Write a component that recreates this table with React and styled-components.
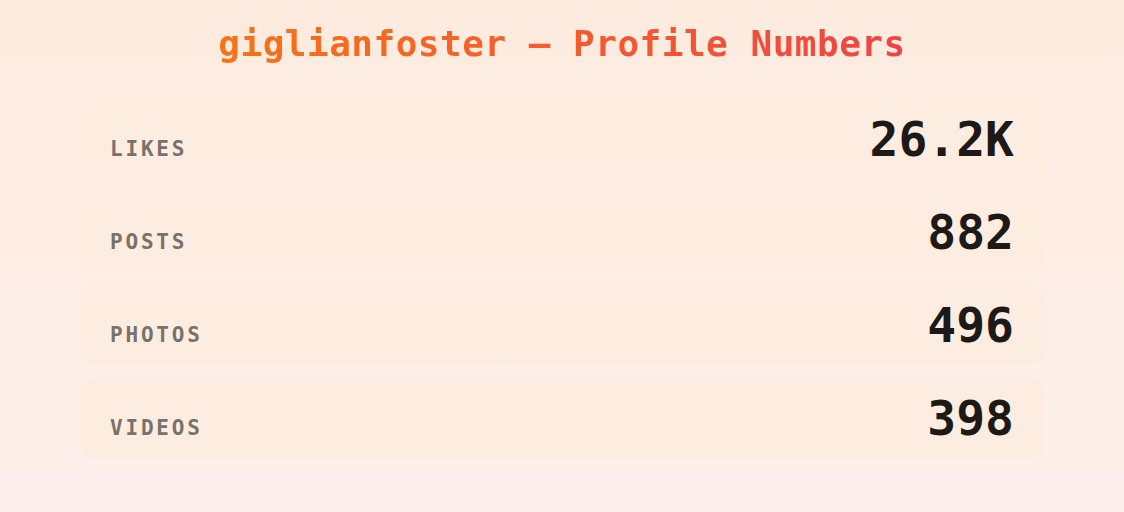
import React from "react";
import styled, { createGlobalStyle } from "styled-components";

const GlobalStyle = createGlobalStyle`
  html, body {
    margin: 0;
    padding: 0;
  }
  body {
    background: linear-gradient(180deg, #fdebdf 0%, #fdf0ec 100%);
    min-height: 512px;
    font-family: "DejaVu Sans Mono", "Liberation Mono", monospace;
  }
`;

const stats = [
  { label: "Likes", value: "26.2K" },
  { label: "Posts", value: "882" },
  { label: "Photos", value: "496" },
  { label: "Videos", value: "398" },
];

export default function App() {
  return (
    <>
      <GlobalStyle />
      <Page>
        <Title>giglianfoster — Profile Numbers</Title>
        <StatList>
          {stats.map((s) => (
            <StatRow key={s.label}>
              <Label>{s.label}</Label>
              <Value>{s.value}</Value>
            </StatRow>
          ))}
        </StatList>
      </Page>
    </>
  );
}

const Page = styled.div`
  min-height: 512px;
  box-sizing: border-box;
  padding: 22px 80px 0;
  display: flex;
  flex-direction: column;
  align-items: stretch;
`;

const Title = styled.h1`
  margin: 0 0 34px;
  text-align: center;
  font-size: 36px;
  line-height: 44px;
  font-weight: bold;
  letter-spacing: 0.5px;
  background: linear-gradient(90deg, #f97316 0%, #ef4444 100%);
  -webkit-background-clip: text;
  background-clip: text;
  color: transparent;
  width: fit-content;
  align-self: center;
`;

const StatList = styled.div`
  display: grid;
  gap: 15px;
`;

const StatRow = styled.div`
  display: flex;
  justify-content: space-between;
  align-items: baseline;
  padding: 15px 30px;
  border-radius: 12px;
  background: #fdede0;
`;

const Label = styled.span`
  text-transform: uppercase;
  font-size: 21px;
  font-weight: bold;
  letter-spacing: 2.8px;
  color: #78716c;
`;

const Value = styled.span`
  font-size: 48px;
  line-height: 48px;
  font-weight: bold;
  color: #1c1917;
`;
